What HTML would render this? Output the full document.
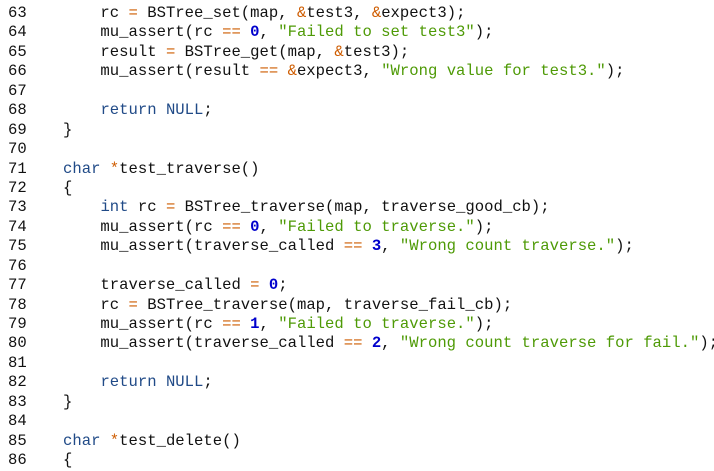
<!DOCTYPE html>
<html><head><meta charset="utf-8"><style>
html,body{margin:0;padding:0;background:#fff;width:714px;height:469px;overflow:hidden}
pre{margin:0;position:absolute;top:4px;left:0;font-family:"Liberation Mono","DejaVu Sans Mono",monospace;font-size:15.6px;line-height:19.43px;color:#111;}
.n{display:inline-block;width:63px;padding-left:8px;box-sizing:border-box}
.o{color:#ce5c00}
.d{color:#0000cc;font-weight:bold}
.s{color:#4e9a06}
.k{color:#204a87}
</style></head><body><pre>
<span class="n">63</span>    rc <span class="o">=</span> BSTree_set(map, <span class="o">&amp;</span>test3, <span class="o">&amp;</span>expect3);
<span class="n">64</span>    mu_assert(rc <span class="o">==</span> <span class="d">0</span>, <span class="s">"Failed to set test3"</span>);
<span class="n">65</span>    result <span class="o">=</span> BSTree_get(map, <span class="o">&amp;</span>test3);
<span class="n">66</span>    mu_assert(result <span class="o">==</span> <span class="o">&amp;</span>expect3, <span class="s">"Wrong value for test3."</span>);
<span class="n">67</span>
<span class="n">68</span>    <span class="k">return</span> <span class="k">NULL</span>;
<span class="n">69</span>}
<span class="n">70</span>
<span class="n">71</span><span class="k">char</span> <span class="o">*</span>test_traverse()
<span class="n">72</span>{
<span class="n">73</span>    <span class="k">int</span> rc <span class="o">=</span> BSTree_traverse(map, traverse_good_cb);
<span class="n">74</span>    mu_assert(rc <span class="o">==</span> <span class="d">0</span>, <span class="s">"Failed to traverse."</span>);
<span class="n">75</span>    mu_assert(traverse_called <span class="o">==</span> <span class="d">3</span>, <span class="s">"Wrong count traverse."</span>);
<span class="n">76</span>
<span class="n">77</span>    traverse_called <span class="o">=</span> <span class="d">0</span>;
<span class="n">78</span>    rc <span class="o">=</span> BSTree_traverse(map, traverse_fail_cb);
<span class="n">79</span>    mu_assert(rc <span class="o">==</span> <span class="d">1</span>, <span class="s">"Failed to traverse."</span>);
<span class="n">80</span>    mu_assert(traverse_called <span class="o">==</span> <span class="d">2</span>, <span class="s">"Wrong count traverse for fail."</span>);
<span class="n">81</span>
<span class="n">82</span>    <span class="k">return</span> <span class="k">NULL</span>;
<span class="n">83</span>}
<span class="n">84</span>
<span class="n">85</span><span class="k">char</span> <span class="o">*</span>test_delete()
<span class="n">86</span>{
</pre></body></html>
